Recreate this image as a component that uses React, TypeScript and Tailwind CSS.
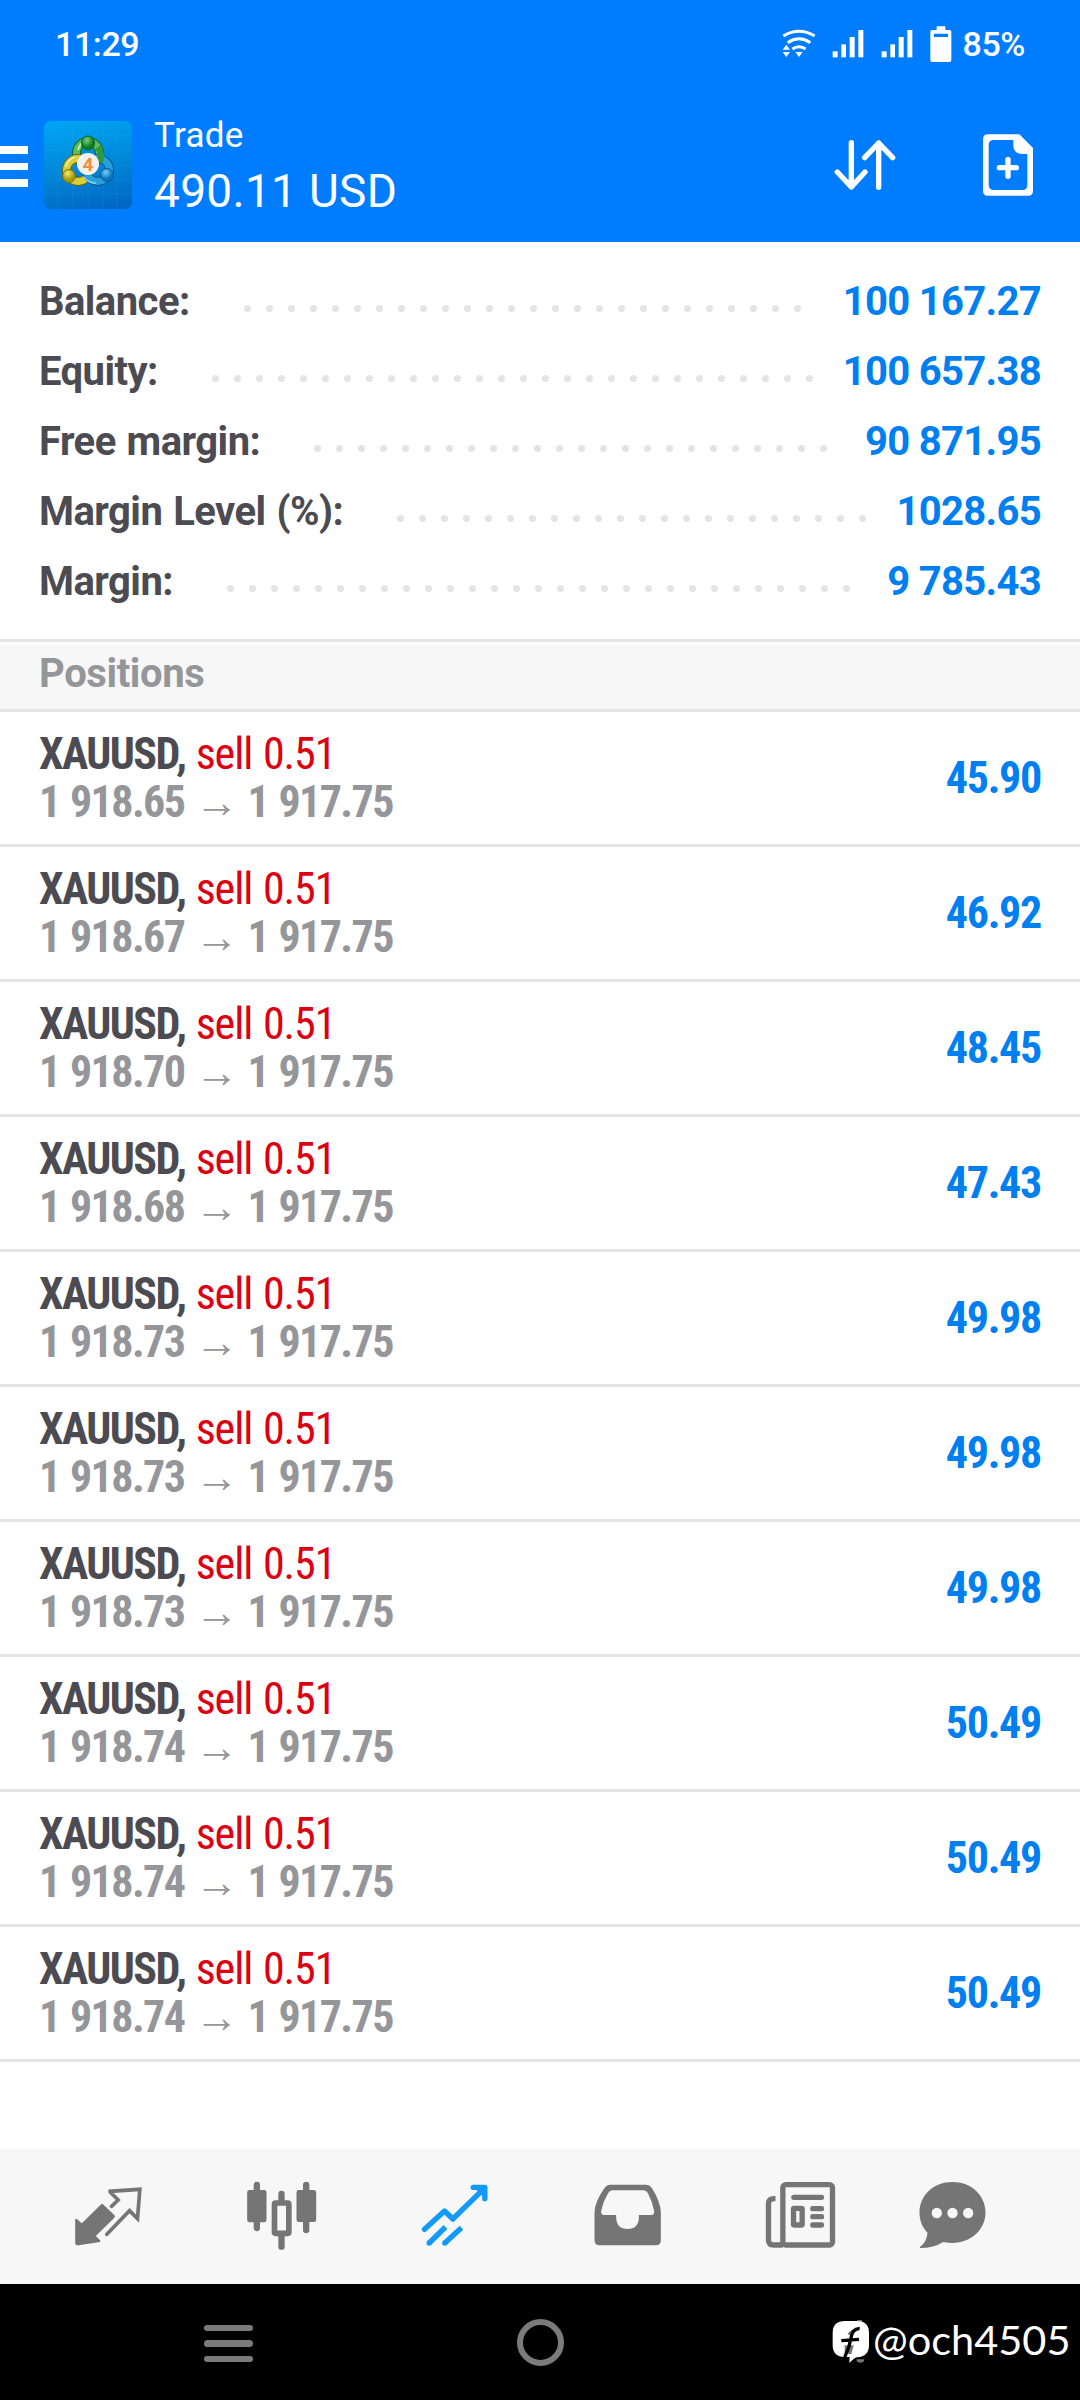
import type { ReactNode } from "react";

const summary = [
  { label: "Balance:", value: "100 167.27" },
  { label: "Equity:", value: "100 657.38" },
  { label: "Free margin:", value: "90 871.95" },
  { label: "Margin Level (%):", value: "1028.65" },
  { label: "Margin:", value: "9 785.43" },
];

const positions = [
  { open: "1 918.65", profit: "45.90" },
  { open: "1 918.67", profit: "46.92" },
  { open: "1 918.70", profit: "48.45" },
  { open: "1 918.68", profit: "47.43" },
  { open: "1 918.73", profit: "49.98" },
  { open: "1 918.73", profit: "49.98" },
  { open: "1 918.73", profit: "49.98" },
  { open: "1 918.74", profit: "50.49" },
  { open: "1 918.74", profit: "50.49" },
  { open: "1 918.74", profit: "50.49" },
];

const WifiIcon = () => (
  <svg width="34" height="37" viewBox="128 78 102 111" fill="none" stroke="#fff" strokeWidth="9">
    <path d="M132 108Q179 80 226 108" />
    <path d="M145 128Q179 105 213 128" />
    <path d="M159 147Q179 133 199 147" />
    <path d="M130 149L141 134L152 149ZM130 156H152L141 171ZM168 156H190L179 171Z" fill="#fff" stroke="none" />
  </svg>
);

const SignalIcon = () => (
  <svg width="32" height="37" viewBox="278 78 96 111" fill="#fff">
    <rect x="280" y="154" width="15" height="18" />
    <rect x="306" y="133" width="14" height="39" />
    <rect x="331" y="111" width="15" height="61" />
    <rect x="357" y="90" width="15" height="82" />
  </svg>
);

const BatteryIcon = () => (
  <svg width="22" height="37" viewBox="572 78 66 111" fill="#fff">
    <path
      fillRule="evenodd"
      d="M592 79H618V90H631Q636 90 636 95V180Q636 186 631 186H578Q573 186 573 180V95Q573 90 578 90H592ZM584 101V111H626V101Z"
    />
  </svg>
);

const AppLogo = () => (
  <svg width="88" height="88" viewBox="0 0 88 88">
    <defs>
      <linearGradient id="logoBg" x1="0.4" y1="0" x2="0.6" y2="1">
        <stop offset="0" stopColor="#00a2f2" />
        <stop offset="0.5" stopColor="#0088d8" />
        <stop offset="1" stopColor="#0068c4" />
      </linearGradient>
      <radialGradient id="logoGreen" cx="0.4" cy="0.3">
        <stop offset="0" stopColor="#7fd07a" />
        <stop offset="1" stopColor="#0b7d22" />
      </radialGradient>
      <radialGradient id="logoYellow" cx="0.4" cy="0.3">
        <stop offset="0" stopColor="#f3e878" />
        <stop offset="1" stopColor="#a39a05" />
      </radialGradient>
      <radialGradient id="logoBlue" cx="0.4" cy="0.3">
        <stop offset="0" stopColor="#74d0fb" />
        <stop offset="1" stopColor="#0a74bd" />
      </radialGradient>
    </defs>
    <rect width="88" height="88" rx="7" fill="url(#logoBg)" />
    <path d="M14 0V88M29 0V88M44 0V88M59 0V88M73 0V88M0 14H88M0 29H88M0 44H88M0 58H88M0 73H88" stroke="#35b0f5" strokeOpacity="0.16" fill="none" />
    <g fill="none">
      <circle cx="44" cy="32" r="11.5" stroke="#14622a" strokeWidth="9" />
      <circle cx="44" cy="32" r="11.5" stroke="#5cbc58" strokeWidth="7" />
      <circle cx="34" cy="49" r="11.5" stroke="#6d6a10" strokeWidth="9" />
      <circle cx="34" cy="49" r="11.5" stroke="#dccf34" strokeWidth="7" />
      <circle cx="54" cy="49" r="11.5" stroke="#0a5b94" strokeWidth="9" />
      <circle cx="54" cy="49" r="11.5" stroke="#2a9fdc" strokeWidth="7" />
      <path d="M34 29Q36 21 43 19M22 46Q24 38 31 36" stroke="#e2f5c0" strokeWidth="1.5" />
      <path d="M40 56Q44 62 52 62" stroke="#7fd0f5" strokeWidth="1.5" />
      <path d="M54 26Q59 33 56 41" stroke="#2e9a3b" strokeWidth="6" />
    </g>
    <ellipse cx="44" cy="22" rx="6.5" ry="7" fill="url(#logoGreen)" stroke="#0d5f22" />
    <ellipse cx="25" cy="55" rx="6.5" ry="6.5" fill="url(#logoYellow)" stroke="#757108" />
    <ellipse cx="63" cy="54" rx="6.5" ry="6.5" fill="url(#logoBlue)" stroke="#0a5c9a" />
    <circle cx="44" cy="43" r="11" fill="#f3f1f1" />
    <text x="44" y="50" textAnchor="middle" fontFamily="Roboto, sans-serif" fontSize="19" fontWeight="700" fill="#f28c3a">
      4
    </text>
  </svg>
);

const SortIcon = () => (
  <svg width="62" height="54" viewBox="282 414 186 162" fill="none" stroke="#fff" strokeWidth="16" strokeLinecap="round" strokeLinejoin="round">
    <path d="M334 428V561M292 516L334 561L375 516" />
    <path d="M416 562V429M374 473L416 429L458 473" />
  </svg>
);

const NewOrderIcon = () => (
  <svg width="50" height="62" viewBox="729 402 150 186" fill="none" stroke="#fff" strokeLinecap="round">
    <path
      fill="#fff"
      stroke="none"
      fillRule="evenodd"
      d="M744 403H838L879 444V572Q879 587 864 587H744Q729 587 729 572V418Q729 403 744 403ZM762 420Q746 420 746 436V554Q746 570 762 570H847Q862 570 862 554V462H848Q820 462 820 434V420Z"
    />
    <path d="M778 503H829M804 478V529" strokeWidth="16" />
  </svg>
);

const NavIcon = ({ viewBox, children }: { viewBox: string; children: ReactNode }) => (
  <svg width="73" height="73" viewBox={viewBox} fill="none" strokeLinecap="round" strokeLinejoin="round">
    {children}
  </svg>
);

const QuotesIcon = () => (
  <NavIcon viewBox="216.5 150 219 219">
    <path d="M226 268L230 266L246 280L304 223Q308 221 312 225L344 256Q347 260 343 264L288 318L302 332L300 336L237 346Q227 347 226 338Z" fill="#757575" />
    <path d="M335 229L355 210L331 186V184L420 178L413 266L389 242L321 313" stroke="#757575" strokeWidth="11" strokeLinejoin="miter" />
  </NavIcon>
);

const ChartIcon = () => (
  <NavIcon viewBox="733.5 150 219 219">
    <g fill="#757575">
      <rect x="740" y="180" width="58" height="97" rx="7" />
      <rect x="888" y="180" width="59" height="96" rx="7" />
    </g>
    <rect x="822" y="219" width="43" height="91" rx="3" stroke="#757575" strokeWidth="17" />
    <path d="M769 165V294M917 165V300M843 192V212M843 318V350" stroke="#757575" strokeWidth="19" />
  </NavIcon>
);

const TradeIcon = () => (
  <NavIcon viewBox="172.5 150 219 219">
    <g stroke="#129afb" strokeWidth="16">
      <path d="M192 298L252 243L277 267L368 178" />
      <path d="M338 172H373V206" />
      <path d="M355 176L370 176V192Z" fill="#129afb" />
      <path d="M206 339L255 291M253 339L303 293" strokeLinecap="butt" />
      <path d="M206 339H206M253 339H253" />
    </g>
  </NavIcon>
);

const InboxIcon = () => (
  <NavIcon viewBox="692.5 150 219 219">
    <path
      fill="#757575"
      fillRule="evenodd"
      d="M750 164H857Q868 164 875 174Q902 217 902 248V331Q902 346 887 346H718Q703 346 703 331V248Q703 217 733 174Q740 164 750 164ZM757 181Q748 181 744 189Q728 216 723 243Q722 255 732 255H768V264Q770 297 802 297Q834 297 836 264V255H873Q883 255 882 243Q877 216 863 189Q859 181 850 181Z"
    />
  </NavIcon>
);

const NewsIcon = () => (
  <NavIcon viewBox="133.5 150 219 219">
    <g stroke="#757575" strokeWidth="16">
      <rect x="190" y="164" width="149" height="181" rx="9" />
      <path d="M168 206H163Q147 206 147 222V330Q147 345 163 345H190" strokeLinecap="butt" />
      <path d="M223 202H306M280 236H306M280 260H306M280 285H306" />
      <rect x="222" y="235" width="26" height="50" rx="2" />
    </g>
  </NavIcon>
);

const ChatIcon = () => (
  <NavIcon viewBox="589.5 150 219 219">
    <path
      d="M699 156C755 156 798 196 798 247C798 299 755 339 699 339Q684 339 671 336Q643 354 602 354Q600 352 602 350Q622 336 624 308C608 292 600 271 600 247C600 196 643 156 699 156Z"
      fill="#757575"
    />
    <g fill="#f7f7f7">
      <circle cx="652" cy="249" r="15.5" />
      <circle cx="699" cy="249" r="15.5" />
      <circle cx="746" cy="249" r="15.5" />
    </g>
  </NavIcon>
);

const WatermarkLogo = () => (
  <svg width="38" height="44" viewBox="336 572 114 132">
    <path d="M410 690H432V696Q422 704 410 696ZM412 572H426V580H412Z" fill="#777" />
    <path
      d="M375 575H411Q447 575 447 611V648Q447 682 411 684Q402 686 388 701L389 683H375Q338 683 338 648V611Q338 575 375 575Z"
      fill="#fff"
    />
    <path d="M386 616Q395 604 414 600M378 652H396L391 670H378Z" stroke="#777" strokeWidth="8" fill="#777" />
    <path d="M419 598Q398 596 393 626Q388 656 374 684M364 634L417 630" stroke="#000" strokeWidth="10" fill="none" />
  </svg>
);

const Header = () => (
  <header className="h-[242px] bg-[#007dff] text-white">
    <div className="flex h-[89px] items-center justify-between pl-[55px] pr-[55px] text-[34px] font-medium tracking-[-0.4px]">
      <span>11:29</span>
      <div className="flex items-center">
        <WifiIcon />
        <div className="ml-4 flex gap-[17px]">
          <SignalIcon />
          <SignalIcon />
        </div>
        <div className="ml-[17px] mr-[11px]">
          <BatteryIcon />
        </div>
        <span>85%</span>
      </div>
    </div>
    <div className="flex h-[152px] items-center">
      <div className="flex w-7 flex-col gap-[9px] pt-[3px]">
        <div className="h-[7.5px] bg-white" />
        <div className="h-[7.5px] bg-white" />
        <div className="h-[7.5px] bg-white" />
      </div>
      <div className="ml-4">
        <AppLogo />
      </div>
      <div className="ml-[22px] flex-1 whitespace-nowrap">
        <div className="text-[35px] leading-[53px] tracking-[0.3px]">Trade</div>
        <div className="text-[46px] leading-[59px] tracking-[0.3px]">490.11 USD</div>
      </div>
      <SortIcon />
      <div className="ml-[87px] mr-[47px]">
        <NewOrderIcon />
      </div>
    </div>
  </header>
);

const SummaryRow = ({ label, value }: { label: string; value: string }) => (
  <div className="flex h-[70px] items-center text-[40px] font-bold">
    <span className="tracking-[-0.55px] [word-spacing:1.5px] text-[#4c4b52]">{label}</span>
    <div className="ml-[54px] mr-[26px] mt-[13px] flex h-[7px] flex-1 flex-wrap gap-[15px] overflow-hidden">
      {Array.from({ length: 32 }, (_, i) => (
        <span key={i} className="size-[7px] rounded-full bg-[#e4e4e4]" />
      ))}
    </div>
    <span className="tracking-[-0.7px] text-[#0080f0]">{value}</span>
  </div>
);

const PositionRow = ({ open, profit }: { open: string; profit: string }) => (
  <div className="flex h-[135px] items-center justify-between border-b-3 border-[#e5e5e5] pl-[39px] pr-[39px] font-['Roboto_Condensed',Roboto,sans-serif] text-[44px] font-bold tracking-[-1.6px] [font-stretch:75%] [word-spacing:1.8px]">
    <div className="leading-[48px]">
      <div className="text-[#4c4b52]">
        XAUUSD, <span className="font-normal tracking-[-1.1px] text-[#dc0010]">sell 0.51</span>
      </div>
      <div className="text-[#95969a]">{open} → 1 917.75</div>
    </div>
    <span className="tracking-[-1.3px] text-[#0080f0]">{profit}</span>
  </div>
);

export default function App() {
  return (
    <div className="flex h-[2400px] w-[1080px] flex-col overflow-hidden bg-white font-[Roboto,sans-serif]">
      <Header />

      {/* Account summary */}
      <section className="h-[397px] pl-[39px] pr-[39px] pt-[25px]">
        {summary.map((row) => (
          <SummaryRow key={row.label} {...row} />
        ))}
      </section>

      {/* Positions */}
      <div className="border-t-3 border-[#e5e5e5] pt-[3px]">
        <div className="h-[67px] border-b-3 border-[#e5e5e5] bg-[#f7f7f7] pl-[39px] text-[40px] font-bold leading-[58px] tracking-[-0.4px] text-[#95969a]">
          Positions
        </div>
      </div>
      <section className="flex-1">
        {positions.map((row, i) => (
          <PositionRow key={i} {...row} />
        ))}
      </section>

      <nav className="flex h-[135px] items-center bg-[#f7f7f7] pl-[22px]">
        {[QuotesIcon, ChartIcon, TradeIcon, InboxIcon, NewsIcon].map((Icon, i) => (
          <div key={i} className="flex w-[173px] justify-center">
            <Icon />
          </div>
        ))}
        <div className="flex w-[131px] justify-center">
          <ChatIcon />
        </div>
      </nav>

      {/* System buttons */}
      <footer className="flex h-[116px] items-center bg-black">
        <div className="ml-[204px] flex w-[49px] flex-col gap-[9px] pt-[3px]">
          <div className="h-[6.5px] rounded-full bg-[#7b7b7b]" />
          <div className="h-[6.5px] rounded-full bg-[#7b7b7b]" />
          <div className="h-[6.5px] rounded-full bg-[#7b7b7b]" />
        </div>
        <div className="ml-[264px] size-[47px] rounded-full border-6 border-[#7b7b7b]" />
        <div className="ml-[268px] flex items-center whitespace-nowrap font-[Lato,sans-serif] text-[41.5px] text-white">
          <WatermarkLogo />
          <span className="ml-[3px] pb-[5px]">@och4505</span>
        </div>
      </footer>
    </div>
  );
}
